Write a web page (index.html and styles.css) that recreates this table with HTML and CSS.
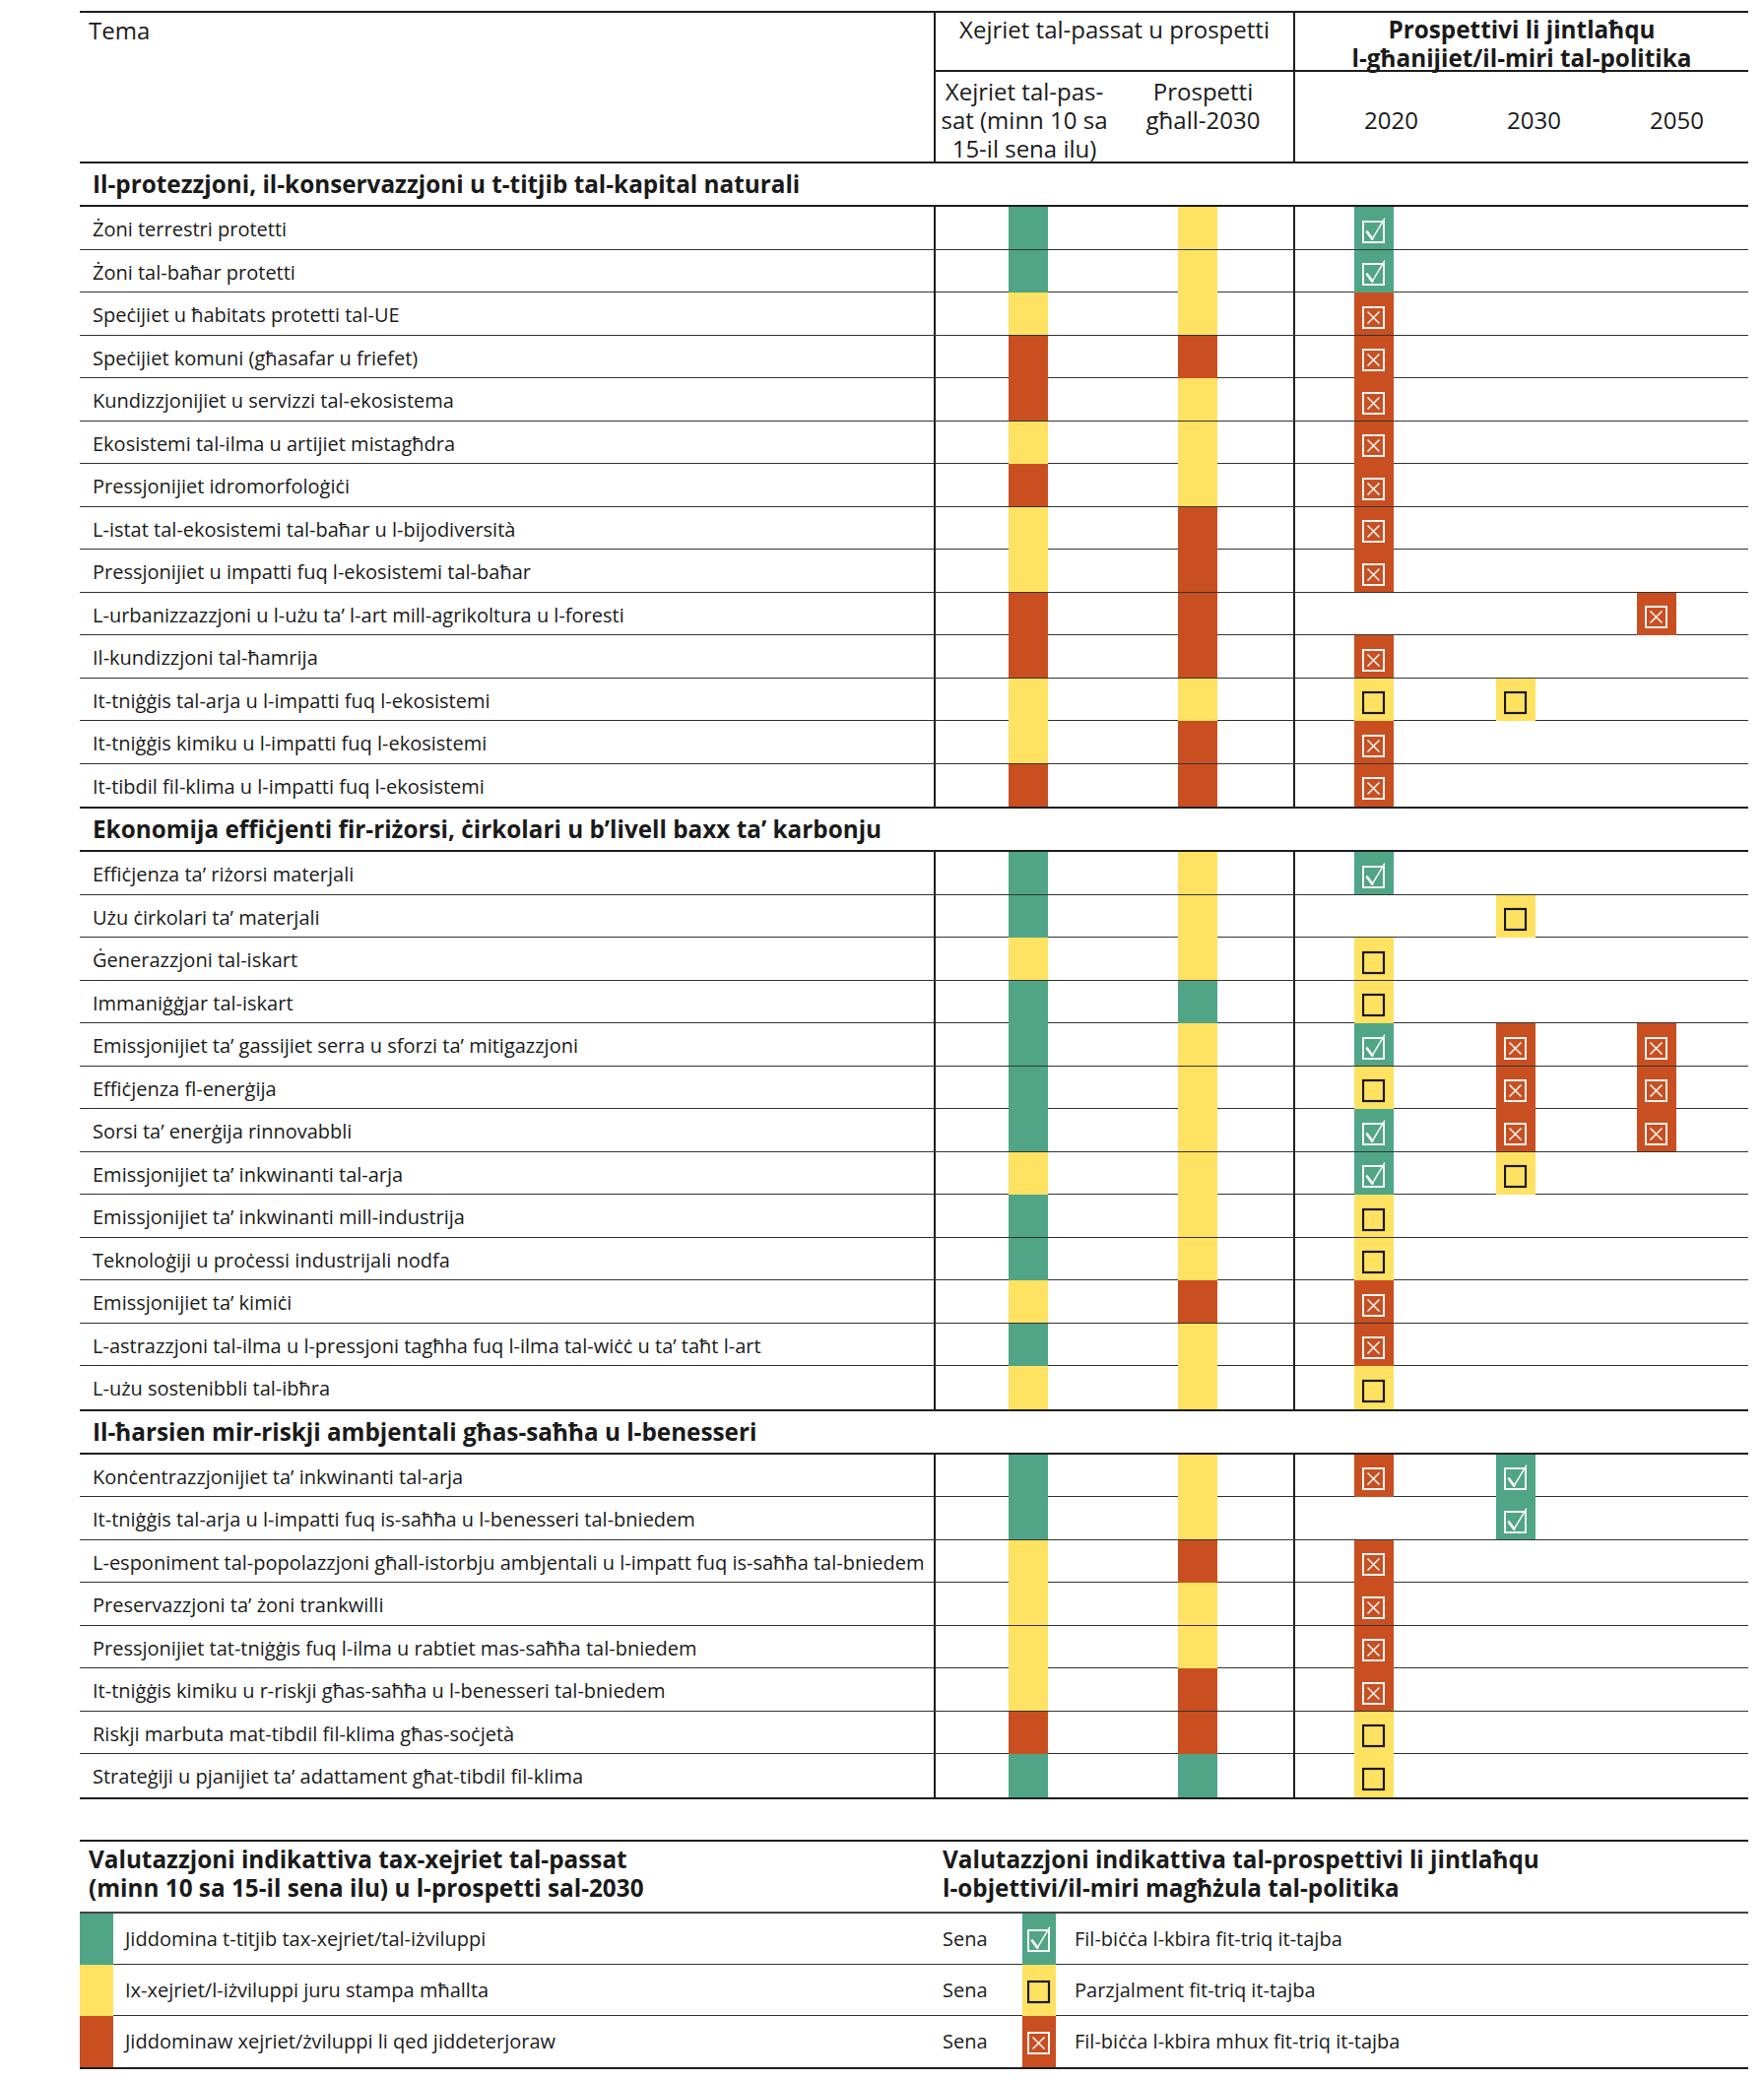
FILE: index.html
```html
<!DOCTYPE html>
<html lang="mt">
<head>
<meta charset="utf-8">
<title>Tabella</title>
<link rel="stylesheet" href="styles.css">
</head>
<body>
<svg class="defs" width="0" height="0" aria-hidden="true">
  <symbol id="ok" viewBox="0 0 24 27">
    <rect x="1" y="4" width="21" height="21" fill="none" stroke="currentColor" stroke-width="2"/>
    <path d="M5 14.5 L10.3 21.6" fill="none" stroke="currentColor" stroke-width="2.8" stroke-linecap="round"/>
    <path d="M10.3 21.6 L22.6 1.2" fill="none" stroke="currentColor" stroke-width="1.6" stroke-linecap="round"/>
  </symbol>
  <symbol id="no" viewBox="0 0 24 27">
    <rect x="1" y="4" width="21" height="21" fill="none" stroke="currentColor" stroke-width="2"/>
    <path d="M5.5 8.5 L17.5 20.5 M17.5 8.5 L5.5 20.5" fill="none" stroke="currentColor" stroke-width="1.6"/>
  </symbol>
  <symbol id="bx" viewBox="0 0 24 27">
    <rect x="1" y="4" width="21" height="21" fill="none" stroke="currentColor" stroke-width="2.2"/>
  </symbol>
</svg>
<div class="page">
  <div class="tbl">
    <div class="thead">
      <div class="th-tema">Tema</div>
      <div class="th-a">
        <div class="th-top">Xejriet tal-passat u prospetti</div>
        <div class="th-a-sub">
          <div class="sub1">Xejriet tal-pas-<br>sat (minn 10 sa<br>15-il sena ilu)</div>
          <div class="sub2">Prospetti<br>għall-2030</div>
        </div>
      </div>
      <div class="th-b">
        <div class="th-top bold">Prospettivi li jintlaħqu<br>l-għanijiet/il-miri tal-politika</div>
        <div class="th-b-sub"><span>2020</span><span>2030</span><span>2050</span></div>
      </div>
    </div>

    <div class="sect">
      <div class="sect-title">Il-protezzjoni, il-konservazzjoni u t-titjib tal-kapital naturali</div>
      <div class="row"><div class="lbl">Żoni terrestri protetti</div><div class="ca"><i class="bar g p1"></i><i class="bar y p2"></i></div><div class="cb"><i class="bar g t20"><svg class="ic"><use href="#ok"/></svg></i></div></div>
      <div class="row"><div class="lbl">Żoni tal-baħar protetti</div><div class="ca"><i class="bar g p1"></i><i class="bar y p2"></i></div><div class="cb"><i class="bar g t20"><svg class="ic"><use href="#ok"/></svg></i></div></div>
      <div class="row"><div class="lbl">Speċijiet u ħabitats protetti tal-UE</div><div class="ca"><i class="bar y p1"></i><i class="bar y p2"></i></div><div class="cb"><i class="bar r t20"><svg class="ic"><use href="#no"/></svg></i></div></div>
      <div class="row"><div class="lbl">Speċijiet komuni (għasafar u friefet)</div><div class="ca"><i class="bar r p1"></i><i class="bar r p2"></i></div><div class="cb"><i class="bar r t20"><svg class="ic"><use href="#no"/></svg></i></div></div>
      <div class="row"><div class="lbl">Kundizzjonijiet u servizzi tal-ekosistema</div><div class="ca"><i class="bar r p1"></i><i class="bar y p2"></i></div><div class="cb"><i class="bar r t20"><svg class="ic"><use href="#no"/></svg></i></div></div>
      <div class="row"><div class="lbl">Ekosistemi tal-ilma u artijiet mistagħdra</div><div class="ca"><i class="bar y p1"></i><i class="bar y p2"></i></div><div class="cb"><i class="bar r t20"><svg class="ic"><use href="#no"/></svg></i></div></div>
      <div class="row"><div class="lbl">Pressjonijiet idromorfoloġiċi</div><div class="ca"><i class="bar r p1"></i><i class="bar y p2"></i></div><div class="cb"><i class="bar r t20"><svg class="ic"><use href="#no"/></svg></i></div></div>
      <div class="row"><div class="lbl">L-istat tal-ekosistemi tal-baħar u l-bijodiversità</div><div class="ca"><i class="bar y p1"></i><i class="bar r p2"></i></div><div class="cb"><i class="bar r t20"><svg class="ic"><use href="#no"/></svg></i></div></div>
      <div class="row"><div class="lbl">Pressjonijiet u impatti fuq l-ekosistemi tal-baħar</div><div class="ca"><i class="bar y p1"></i><i class="bar r p2"></i></div><div class="cb"><i class="bar r t20"><svg class="ic"><use href="#no"/></svg></i></div></div>
      <div class="row"><div class="lbl">L-urbanizzazzjoni u l-użu ta’ l-art mill-agrikoltura u l-foresti</div><div class="ca"><i class="bar r p1"></i><i class="bar r p2"></i></div><div class="cb"><i class="bar r t50"><svg class="ic"><use href="#no"/></svg></i></div></div>
      <div class="row"><div class="lbl">Il-kundizzjoni tal-ħamrija</div><div class="ca"><i class="bar r p1"></i><i class="bar r p2"></i></div><div class="cb"><i class="bar r t20"><svg class="ic"><use href="#no"/></svg></i></div></div>
      <div class="row"><div class="lbl">It-tniġġis tal-arja u l-impatti fuq l-ekosistemi</div><div class="ca"><i class="bar y p1"></i><i class="bar y p2"></i></div><div class="cb"><i class="bar y t20"><svg class="ic"><use href="#bx"/></svg></i><i class="bar y t30"><svg class="ic"><use href="#bx"/></svg></i></div></div>
      <div class="row"><div class="lbl">It-tniġġis kimiku u l-impatti fuq l-ekosistemi</div><div class="ca"><i class="bar y p1"></i><i class="bar r p2"></i></div><div class="cb"><i class="bar r t20"><svg class="ic"><use href="#no"/></svg></i></div></div>
      <div class="row"><div class="lbl">It-tibdil fil-klima u l-impatti fuq l-ekosistemi</div><div class="ca"><i class="bar r p1"></i><i class="bar r p2"></i></div><div class="cb"><i class="bar r t20"><svg class="ic"><use href="#no"/></svg></i></div></div>
    </div>

    <div class="sect">
      <div class="sect-title">Ekonomija effiċjenti fir-riżorsi, ċirkolari u b’livell baxx ta’ karbonju</div>
      <div class="row"><div class="lbl">Effiċjenza ta’ riżorsi materjali</div><div class="ca"><i class="bar g p1"></i><i class="bar y p2"></i></div><div class="cb"><i class="bar g t20"><svg class="ic"><use href="#ok"/></svg></i></div></div>
      <div class="row"><div class="lbl">Użu ċirkolari ta’ materjali</div><div class="ca"><i class="bar g p1"></i><i class="bar y p2"></i></div><div class="cb"><i class="bar y t30"><svg class="ic"><use href="#bx"/></svg></i></div></div>
      <div class="row"><div class="lbl">Ġenerazzjoni tal-iskart</div><div class="ca"><i class="bar y p1"></i><i class="bar y p2"></i></div><div class="cb"><i class="bar y t20"><svg class="ic"><use href="#bx"/></svg></i></div></div>
      <div class="row"><div class="lbl">Immaniġġjar tal-iskart</div><div class="ca"><i class="bar g p1"></i><i class="bar g p2"></i></div><div class="cb"><i class="bar y t20"><svg class="ic"><use href="#bx"/></svg></i></div></div>
      <div class="row"><div class="lbl">Emissjonijiet ta’ gassijiet serra u sforzi ta’ mitigazzjoni</div><div class="ca"><i class="bar g p1"></i><i class="bar y p2"></i></div><div class="cb"><i class="bar g t20"><svg class="ic"><use href="#ok"/></svg></i><i class="bar r t30"><svg class="ic"><use href="#no"/></svg></i><i class="bar r t50"><svg class="ic"><use href="#no"/></svg></i></div></div>
      <div class="row"><div class="lbl">Effiċjenza fl-enerġija</div><div class="ca"><i class="bar g p1"></i><i class="bar y p2"></i></div><div class="cb"><i class="bar y t20"><svg class="ic"><use href="#bx"/></svg></i><i class="bar r t30"><svg class="ic"><use href="#no"/></svg></i><i class="bar r t50"><svg class="ic"><use href="#no"/></svg></i></div></div>
      <div class="row"><div class="lbl">Sorsi ta’ enerġija rinnovabbli</div><div class="ca"><i class="bar g p1"></i><i class="bar y p2"></i></div><div class="cb"><i class="bar g t20"><svg class="ic"><use href="#ok"/></svg></i><i class="bar r t30"><svg class="ic"><use href="#no"/></svg></i><i class="bar r t50"><svg class="ic"><use href="#no"/></svg></i></div></div>
      <div class="row"><div class="lbl">Emissjonijiet ta’ inkwinanti tal-arja</div><div class="ca"><i class="bar y p1"></i><i class="bar y p2"></i></div><div class="cb"><i class="bar g t20"><svg class="ic"><use href="#ok"/></svg></i><i class="bar y t30"><svg class="ic"><use href="#bx"/></svg></i></div></div>
      <div class="row"><div class="lbl">Emissjonijiet ta’ inkwinanti mill-industrija</div><div class="ca"><i class="bar g p1"></i><i class="bar y p2"></i></div><div class="cb"><i class="bar y t20"><svg class="ic"><use href="#bx"/></svg></i></div></div>
      <div class="row"><div class="lbl">Teknoloġiji u proċessi industrijali nodfa</div><div class="ca"><i class="bar g p1"></i><i class="bar y p2"></i></div><div class="cb"><i class="bar y t20"><svg class="ic"><use href="#bx"/></svg></i></div></div>
      <div class="row"><div class="lbl">Emissjonijiet ta’ kimiċi</div><div class="ca"><i class="bar y p1"></i><i class="bar r p2"></i></div><div class="cb"><i class="bar r t20"><svg class="ic"><use href="#no"/></svg></i></div></div>
      <div class="row"><div class="lbl">L-astrazzjoni tal-ilma u l-pressjoni tagħha fuq l-ilma tal-wiċċ u ta’ taħt l-art</div><div class="ca"><i class="bar g p1"></i><i class="bar y p2"></i></div><div class="cb"><i class="bar r t20"><svg class="ic"><use href="#no"/></svg></i></div></div>
      <div class="row"><div class="lbl">L-użu sostenibbli tal-ibħra</div><div class="ca"><i class="bar y p1"></i><i class="bar y p2"></i></div><div class="cb"><i class="bar y t20"><svg class="ic"><use href="#bx"/></svg></i></div></div>
    </div>

    <div class="sect">
      <div class="sect-title">Il-ħarsien mir-riskji ambjentali għas-saħħa u l-benesseri</div>
      <div class="row"><div class="lbl">Konċentrazzjonijiet ta’ inkwinanti tal-arja</div><div class="ca"><i class="bar g p1"></i><i class="bar y p2"></i></div><div class="cb"><i class="bar r t20"><svg class="ic"><use href="#no"/></svg></i><i class="bar g t30"><svg class="ic"><use href="#ok"/></svg></i></div></div>
      <div class="row"><div class="lbl">It-tniġġis tal-arja u l-impatti fuq is-saħħa u l-benesseri tal-bniedem</div><div class="ca"><i class="bar g p1"></i><i class="bar y p2"></i></div><div class="cb"><i class="bar g t30"><svg class="ic"><use href="#ok"/></svg></i></div></div>
      <div class="row"><div class="lbl">L-esponiment tal-popolazzjoni għall-istorbju ambjentali u l-impatt fuq is-saħħa tal-bniedem</div><div class="ca"><i class="bar y p1"></i><i class="bar r p2"></i></div><div class="cb"><i class="bar r t20"><svg class="ic"><use href="#no"/></svg></i></div></div>
      <div class="row"><div class="lbl">Preservazzjoni ta’ żoni trankwilli</div><div class="ca"><i class="bar y p1"></i><i class="bar y p2"></i></div><div class="cb"><i class="bar r t20"><svg class="ic"><use href="#no"/></svg></i></div></div>
      <div class="row"><div class="lbl">Pressjonijiet tat-tniġġis fuq l-ilma u rabtiet mas-saħħa tal-bniedem</div><div class="ca"><i class="bar y p1"></i><i class="bar y p2"></i></div><div class="cb"><i class="bar r t20"><svg class="ic"><use href="#no"/></svg></i></div></div>
      <div class="row"><div class="lbl">It-tniġġis kimiku u r-riskji għas-saħħa u l-benesseri tal-bniedem</div><div class="ca"><i class="bar y p1"></i><i class="bar r p2"></i></div><div class="cb"><i class="bar r t20"><svg class="ic"><use href="#no"/></svg></i></div></div>
      <div class="row"><div class="lbl">Riskji marbuta mat-tibdil fil-klima għas-soċjetà</div><div class="ca"><i class="bar r p1"></i><i class="bar r p2"></i></div><div class="cb"><i class="bar y t20"><svg class="ic"><use href="#bx"/></svg></i></div></div>
      <div class="row"><div class="lbl">Strateġiji u pjanijiet ta’ adattament għat-tibdil fil-klima</div><div class="ca"><i class="bar g p1"></i><i class="bar g p2"></i></div><div class="cb"><i class="bar y t20"><svg class="ic"><use href="#bx"/></svg></i></div></div>
    </div>
  </div>

  <div class="legend">
    <div class="lg-head">
      <div>Valutazzjoni indikattiva tax-xejriet tal-passat<br>(minn 10 sa 15-il sena ilu) u l-prospetti sal-2030</div>
      <div>Valutazzjoni indikattiva tal-prospettivi li jintlaħqu<br>l-objettivi/il-miri magħżula tal-politika</div>
    </div>
    <div class="lg-row">
      <i class="sw g"></i><div class="lt">Jiddomina t-titjib tax-xejriet/tal-iżviluppi</div><div class="sena">Sena</div><i class="sw g"><svg class="ic"><use href="#ok"/></svg></i><div class="lt2">Fil-biċċa l-kbira fit-triq it-tajba</div>
    </div>
    <div class="lg-row">
      <i class="sw y"></i><div class="lt">Ix-xejriet/l-iżviluppi juru stampa mħallta</div><div class="sena">Sena</div><i class="sw y"><svg class="ic"><use href="#bx"/></svg></i><div class="lt2">Parzjalment fit-triq it-tajba</div>
    </div>
    <div class="lg-row">
      <i class="sw r"></i><div class="lt">Jiddominaw xejriet/żviluppi li qed jiddeterjoraw</div><div class="sena">Sena</div><i class="sw r"><svg class="ic"><use href="#no"/></svg></i><div class="lt2">Fil-biċċa l-kbira mhux fit-triq it-tajba</div>
    </div>
  </div>
</div>
</body>
</html>
```

FILE: styles.css
```css
* { box-sizing: border-box; }

body {
  margin: 0;
  background: #ffffff;
  color: #1a1a1a;
  font-family: "Open Sans", "Noto Sans", sans-serif;
}

.defs { position: absolute; width: 0; height: 0; overflow: hidden; }

.page {
  padding: 11px 0 0 81px;
}

.tbl {
  width: 1694px;
  border-top: 2px solid #1e1e1e;
}

/* header */
.thead {
  display: grid;
  grid-template-columns: 867px 365px 1fr;
  height: 153px;
  border-bottom: 2px solid #1e1e1e;
}

.th-tema {
  font-size: 24px;
  line-height: 29px;
  padding: 3px 9px;
}

.th-a,
.th-b {
  border-left: 2px solid #1e1e1e;
  display: flex;
  flex-direction: column;
}

.th-top {
  height: 60px;
  flex: none;
  border-bottom: 2px solid #1e1e1e;
  font-size: 24px;
  line-height: 29px;
  text-align: center;
  padding-top: 2px;
  white-space: nowrap;
}

.bold { font-weight: 700; font-size: 24.3px; }

.th-a-sub {
  flex: 1;
  display: flex;
  font-size: 24px;
  line-height: 29px;
  text-align: center;
  padding-top: 5px;
}

.sub1 { width: 180px; }
.sub2 { flex: 1; }

.th-b-sub {
  flex: 1;
  display: grid;
  grid-template-columns: repeat(3, 145px);
  padding: 5px 0 0 25px;
  align-items: center;
  text-align: center;
  font-size: 24px;
}

/* sections */
.sect {
  border-bottom: 2px solid #1e1e1e;
}

.sect-title {
  height: 44px;
  border-bottom: 2px solid #1e1e1e;
  font-size: 24.3px;
  font-weight: 700;
  line-height: 42px;
  padding-left: 13px;
  white-space: nowrap;
}

.row {
  display: grid;
  grid-template-columns: 867px 365px 1fr;
  height: 43.5px;
  border-bottom: 1px solid #333;
}

.row:last-child { border-bottom: 0; }

.lbl {
  font-size: 20px;
  line-height: 40px;
  padding: 3px 0 0 13px;
  white-space: nowrap;
}

.ca {
  border-left: 2px solid #1e1e1e;
  display: grid;
  grid-template-columns: 74px 40px 132px 40px;
}

.cb {
  border-left: 2px solid #1e1e1e;
  display: grid;
  grid-template-columns: 60px 40px 104px 40px 103px 40px;
}

.bar {
  display: flex;
  justify-content: center;
  align-items: center;
  grid-row: 1;
}

.p1, .t20 { grid-column: 2; }
.p2, .t30 { grid-column: 4; }
.t50 { grid-column: 6; }

.g { background: #4fa586; }
.y { background: #ffe262; }
.r { background: #c94f21; }

.ic {
  width: 24px;
  height: 27px;
  margin-top: 5px;
  color: #f6f6f6;
}

.y .ic { color: #1a1a1a; }

/* legend */
.legend {
  width: 1694px;
  margin-top: 41px;
  border-top: 2px solid #1e1e1e;
  border-bottom: 2px solid #1e1e1e;
}

.lg-head {
  display: grid;
  grid-template-columns: 867px 1fr;
  height: 73px;
  border-bottom: 2px solid #444;
  font-size: 24.3px;
  font-weight: 700;
  line-height: 29.5px;
}

.lg-head > div {
  padding: 3px 9px 0;
  white-space: nowrap;
}

.lg-row {
  display: grid;
  grid-template-columns: 34px 833px 90px 34px 1fr;
  height: 52px;
  font-size: 20px;
}

.lg-row > div {
  border-bottom: 1px solid #333;
  display: flex;
  align-items: center;
  white-space: nowrap;
}

.lg-row:last-child > div { border-bottom: 0; }

.lt { padding-left: 12px; }
.sena { padding-left: 9px; }
.lt2 { padding-left: 19px; }

.sw {
  display: flex;
  align-items: center;
  justify-content: center;
}

.sw .ic { margin-top: 2px; }
```
